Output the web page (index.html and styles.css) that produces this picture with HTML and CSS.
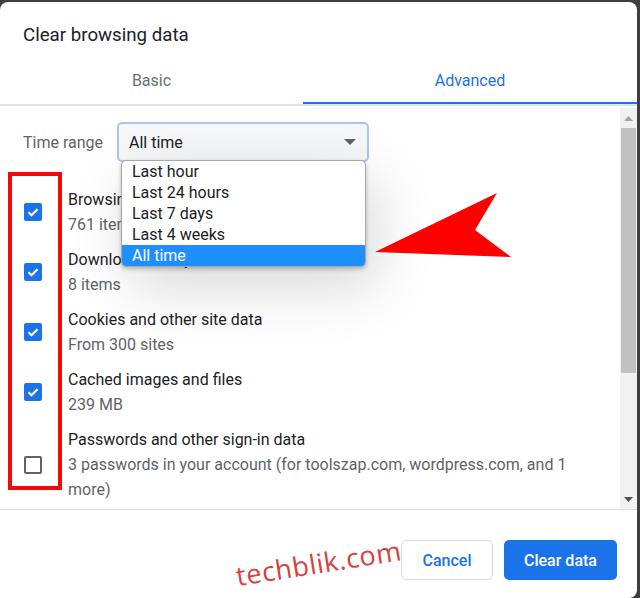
FILE: index.html
```html
<!DOCTYPE html>
<html>
<head>
<meta charset="utf-8">
<link rel="stylesheet" href="styles.css">
</head>
<body>
<div class="dialog">
  <div class="title">Clear browsing data</div>
  <div class="tabs">
    <div class="tab tab-basic">Basic</div>
    <div class="tab tab-adv active">Advanced</div>
  </div>
  <div class="body">
    <div class="content">
      <div class="range">
        <div class="range-label">Time range</div>
        <div class="select">
          <span>All time</span>
          <svg class="caret" width="12" height="6" viewBox="0 0 12 6"><path d="M0 0H12L6 6Z" fill="#5f6368"/></svg>
        </div>
      </div>
      <div class="row">
        <div class="cb on"><svg viewBox="0 0 18 18" width="18" height="18"><path d="M4.5 9.2l3 3 6-6" fill="none" stroke="#fff" stroke-width="2.2"/></svg></div>
        <div class="txt"><div class="lbl">Browsing history</div><div class="sub">761 items</div></div>
      </div>
      <div class="row">
        <div class="cb on"><svg viewBox="0 0 18 18" width="18" height="18"><path d="M4.5 9.2l3 3 6-6" fill="none" stroke="#fff" stroke-width="2.2"/></svg></div>
        <div class="txt"><div class="lbl">Download history</div><div class="sub">8 items</div></div>
      </div>
      <div class="row">
        <div class="cb on"><svg viewBox="0 0 18 18" width="18" height="18"><path d="M4.5 9.2l3 3 6-6" fill="none" stroke="#fff" stroke-width="2.2"/></svg></div>
        <div class="txt"><div class="lbl">Cookies and other site data</div><div class="sub">From 300 sites</div></div>
      </div>
      <div class="row">
        <div class="cb on"><svg viewBox="0 0 18 18" width="18" height="18"><path d="M4.5 9.2l3 3 6-6" fill="none" stroke="#fff" stroke-width="2.2"/></svg></div>
        <div class="txt"><div class="lbl">Cached images and files</div><div class="sub">239 MB</div></div>
      </div>
      <div class="row">
        <div class="cb off"></div>
        <div class="txt"><div class="lbl">Passwords and other sign-in data</div><div class="sub">3 passwords in your account (for toolszap.com, wordpress.com, and 1 more)</div></div>
      </div>
    </div>
    <div class="scrollbar">
      <div class="sb-btn"><svg width="9" height="5" viewBox="0 0 9 5"><path d="M0 5L4.5 0L9 5Z" fill="#a3a3a3"/></svg></div>
      <div class="sb-track"><div class="sb-thumb"></div></div>
      <div class="sb-btn"><svg width="9" height="5" viewBox="0 0 9 5"><path d="M0 0L4.5 5L9 0Z" fill="#505050"/></svg></div>
    </div>
  </div>
  <div class="footer">
    <button class="btn cancel">Cancel</button>
    <button class="btn primary">Clear data</button>
  </div>

  <div class="menu">
    <div class="opt">Last hour</div>
    <div class="opt">Last 24 hours</div>
    <div class="opt">Last 7 days</div>
    <div class="opt">Last 4 weeks</div>
    <div class="opt sel">All time</div>
  </div>
  <div class="redbox"></div>
  <svg class="arrow" width="140" height="70" viewBox="0 0 140 70"><path d="M0 59L122 0L100 37L136 64Z" fill="#ff0000"/></svg>
  <div class="watermark">techblik.com</div>
</div>
</body>
</html>
```

FILE: styles.css
```css
html, body {
  margin: 0;
  padding: 0;
}
body {
  background: #3f3f3f;
  width: 640px;
  height: 598px;
  overflow: hidden;
  font-family: Roboto, "Liberation Sans", sans-serif;
  color: #202124;
}
.dialog {
  position: relative;
  margin-top: 2px;
  width: 637px;
  height: 596px;
  background: #fff;
  border-radius: 8px 8px 8px 0;
  display: flex;
  flex-direction: column;
}
.title {
  font-size: 18.7px;
  line-height: 24px;
  padding: 21px 0 0 23px;
  height: 33px;
}
.tabs {
  display: flex;
  border-bottom: 2px solid #e3e3e3;
  height: 48px;
}
.tab {
  font-size: 16px;
  color: #6b6f73;
  display: flex;
  align-items: center;
  justify-content: center;
  box-sizing: border-box;
  padding-top: 1px;
}
.tab-basic { width: 303px; }
.tab-adv { flex: 1; }
.tab.active {
  color: #1a73e8;
  border-bottom: 2px solid #1a73e8;
  padding-top: 3px;
}
.body {
  display: flex;
  height: 403px;
}
.content {
  flex: 1;
  padding: 16px 0 0 23px;
}
.range {
  display: flex;
  align-items: center;
  height: 40px;
}
.range-label {
  width: 94px;
  font-size: 16px;
  color: #5f6368;
}
.select {
  width: 252px;
  height: 40px;
  box-sizing: border-box;
  border: 2px solid #a9c6f0;
  border-radius: 5px;
  background: #f6f7f8;
  display: flex;
  align-items: center;
  justify-content: space-between;
  padding: 0 11px 0 10px;
  font-size: 16px;
}
.row {
  display: flex;
  align-items: center;
  padding: 5px 0;
}
.range + .row { margin-top: 20px; }
.cb {
  width: 18px;
  height: 18px;
  margin-left: 1px;
  border-radius: 2px;
  box-sizing: border-box;
  flex: none;
}
.cb svg { display: block; }
.cb.on { background: #1a73e8; }
.cb.off { border: 2px solid #5f6368; }
.txt {
  margin-left: 26px;
  width: 528px;
  font-size: 16px;
  line-height: 25px;
}
.sub { color: #5f6368; }
.scrollbar {
  width: 17px;
  background: #f1f1f1;
  display: flex;
  flex-direction: column;
  margin-top: 2px;
}
.sb-btn {
  height: 20px;
  display: flex;
  align-items: center;
  justify-content: center;
}
.sb-track {
  flex: 1;
}
.sb-thumb {
  margin: 0 1px;
  height: 245px;
  background: #c1c1c1;
}
.footer {
  flex: 1;
  border-top: 1px solid #dadce0;
  display: flex;
  justify-content: flex-end;
  align-items: flex-start;
  gap: 11px;
  padding: 30px 20px 0 0;
}
.btn {
  height: 40px;
  border-radius: 5px;
  font-family: Roboto, "Liberation Sans", sans-serif;
  font-size: 16px;
  font-weight: 500;
  padding: 0;
}
.cancel {
  width: 92px;
  background: #fff;
  color: #1a73e8;
  border: 1px solid #dadce0;
}
.primary {
  width: 113px;
  background: #1a73e8;
  color: #fff;
  border: none;
}
.menu {
  position: absolute;
  left: 121px;
  top: 158px;
  width: 245px;
  box-sizing: border-box;
  border: 1px solid #a8a8a8;
  border-radius: 5px;
  background: #fff;
  overflow: hidden;
  box-shadow: 0 2px 4px rgba(0,0,0,0.25), 10px 20px 60px rgba(0,0,0,0.16);
}
.opt {
  font-size: 16px;
  line-height: 21px;
  padding-left: 10px;
  color: #202124;
}
.opt.sel {
  background: #1e8fff;
  color: #fff;
}
.redbox {
  position: absolute;
  left: 8px;
  top: 170px;
  width: 46px;
  height: 310px;
  border: 4px solid #f20a0a;
}
.arrow {
  position: absolute;
  left: 375px;
  top: 191px;
}
.watermark {
  position: absolute;
  left: 239px;
  top: 555px;
  font-family: "Open Sans", Roboto, sans-serif;
  font-size: 27px;
  color: #dc3d3d;
  transform: rotate(-9deg);
  transform-origin: left bottom;
  letter-spacing: 0.6px;
}
```
